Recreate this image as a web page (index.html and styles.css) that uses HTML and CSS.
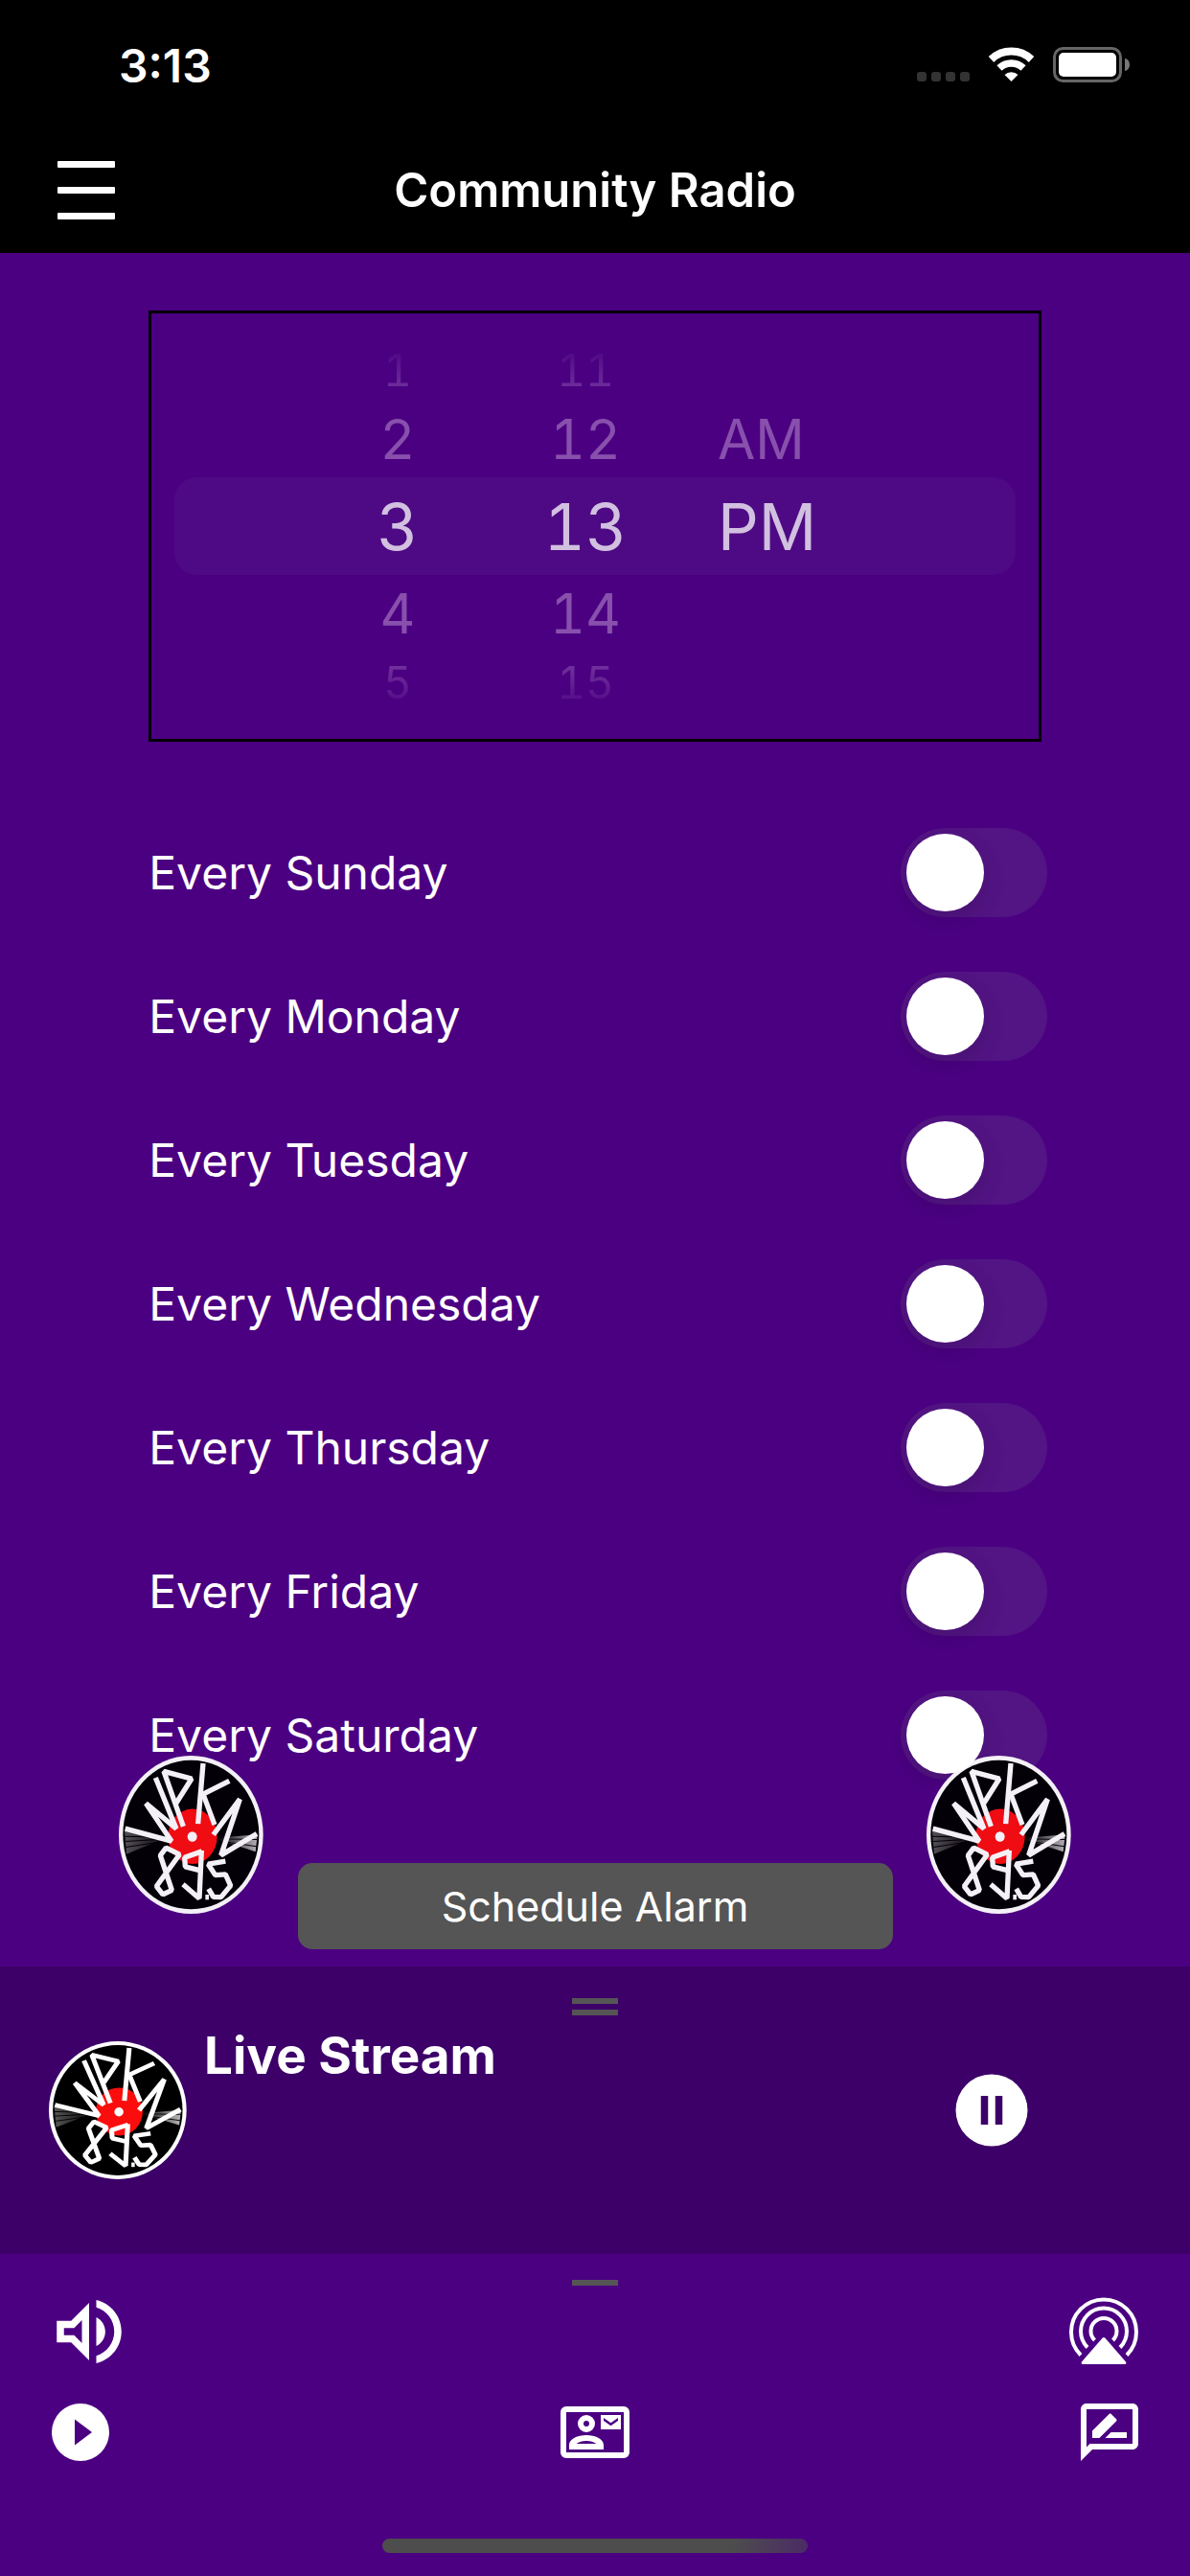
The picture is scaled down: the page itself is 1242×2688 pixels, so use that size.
FILE: index.html
```html
<!DOCTYPE html>
<html lang="en">
<head>
<meta charset="utf-8">
<meta name="viewport" content="width=device-width, initial-scale=1">
<title>Community Radio</title>
<link rel="stylesheet" href="styles.css">
</head>
<body>
<svg class="symbols" aria-hidden="true">
  <defs>
    <linearGradient id="shine-left" x1="0" x2="1" y1="0" y2="0">
      <stop offset="0" stop-color="#555"/><stop offset="1" stop-color="#000"/>
    </linearGradient>
    <linearGradient id="shine-right" x1="0" x2="1" y1="0" y2="0">
      <stop offset="0" stop-color="#000"/><stop offset="1" stop-color="#bbb"/>
    </linearGradient>
  </defs>
  <symbol id="record" viewBox="42 38 453 494" preserveAspectRatio="none">
    <ellipse cx="268" cy="285" rx="226" ry="247" fill="#fff"/>
    <ellipse cx="268" cy="285" rx="213" ry="233" fill="#000"/>
    <path d="M60 274L200 290L66 346z" fill="url(#shine-left)"/>
    <path d="M340 296L476 284L470 338z" fill="url(#shine-right)"/>
    <g stroke="#000" stroke-width="3" fill="none">
      <path d="M60 290L200 293M62 306L200 298M64 324L200 303M340 298L476 300M340 302L474 322"/>
    </g>
    <ellipse cx="273" cy="290" rx="77" ry="86" fill="#fb0d0d"/>
    <ellipse cx="272" cy="291" rx="15" ry="16" fill="#fff"/>
    <g stroke="#fff" stroke-width="16" stroke-linejoin="bevel" fill="none">
      <polyline points="62,266 207,305 127,187 222,266 157,107"/>
      <polyline points="244,259 183,87 270,110 222,186"/>
      <polyline points="306,62 290,251"/>
      <polyline points="388,117 306,158 342,254"/>
      <polyline points="338,285 421,174 362,349 474,282"/>
      <polygon points="190,326 172,350 208,458 180,472 160,446 232,347"/>
      <polyline points="302,337 248,356 250,385 298,397"/>
      <polyline points="301,334 294,484 243,440"/>
      <polyline points="376,368 322,377 344,411 376,409 392,444 362,480 338,479 323,454"/>
      <path d="M313 480h11"/>
    </g>
  </symbol>
</svg>

<div class="screen">
  <header>
    <div class="status">
      <time class="clock">3:13</time>
      <svg class="status-icons" viewBox="950 44 240 48" role="img" aria-label="Wi-Fi on, battery full">
        <g fill="#333">
          <rect x="957" y="75" width="10" height="10" rx="3"/><rect x="972" y="75" width="10" height="10" rx="3"/>
          <rect x="987" y="75" width="10" height="10" rx="3"/><rect x="1002" y="75" width="10" height="10" rx="3"/>
        </g>
        <g fill="none" stroke="#fff">
          <path d="M1034.500 62A30.500 30.500 0 0 1 1076.500 62" stroke-width="8"/>
          <path d="M1043 71A18 18 0 0 1 1068 71" stroke-width="7.500"/>
        </g>
        <path d="M1048.500 78A10 10 0 0 1 1062.500 78L1055.500 85z" fill="#fff"/>
        <rect x="1100.500" y="50.500" width="69" height="34" rx="9" fill="none" stroke="#666" stroke-width="3"/>
        <rect x="1105" y="55" width="60" height="25" rx="5" fill="#fff"/>
        <path d="M1174 61a5 6.500 0 0 1 0 13z" fill="#777"/>
      </svg>
    </div>
    <div class="nav">
      <button class="menu" type="button" aria-label="Menu"><span></span><span></span><span></span></button>
      <h1>Community Radio</h1>
    </div>
  </header>

  <main>
    <section class="picker" aria-label="Alarm time">
      <div class="time far top"><span>1</span><span>11</span><span></span></div>
      <div class="time near"><span>2</span><span>12</span><span>AM</span></div>
      <div class="time selected"><span>3</span><span>13</span><span>PM</span></div>
      <div class="time near"><span>4</span><span>14</span><span></span></div>
      <div class="time far"><span>5</span><span>15</span><span></span></div>
    </section>

    <div class="days">
      <label class="day">Every Sunday<input type="checkbox" role="switch"></label>
      <label class="day">Every Monday<input type="checkbox" role="switch"></label>
      <label class="day">Every Tuesday<input type="checkbox" role="switch"></label>
      <label class="day">Every Wednesday<input type="checkbox" role="switch"></label>
      <label class="day">Every Thursday<input type="checkbox" role="switch"></label>
      <label class="day">Every Friday<input type="checkbox" role="switch"></label>
      <label class="day">Every Saturday<input type="checkbox" role="switch"></label>
    </div>

    <div class="actions">
      <svg class="badge" aria-hidden="true"><use href="#record"/></svg>
      <button class="schedule" type="button">Schedule Alarm</button>
      <svg class="badge" aria-hidden="true"><use href="#record"/></svg>
    </div>
  </main>

  <section class="player" aria-label="Player">
    <div class="grip"><i></i><i></i></div>
    <div class="track">
      <svg class="cover" role="img" aria-label="Station logo"><use href="#record"/></svg>
      <h2>Live Stream</h2>
      <button class="icon large pause" type="button" aria-label="Pause">
        <svg viewBox="0 0 24 24"><path fill-rule="evenodd" d="M12 2a10 10 0 1 0 0 20a10 10 0 1 0 0-20zM9 8h2v8H9zM13 8h2v8h-2z"/></svg>
      </button>
    </div>
  </section>

  <footer>
    <div class="grip"><i></i></div>
    <div class="tools">
      <button class="icon large" type="button" aria-label="Volume">
        <svg viewBox="0 0 24 24"><path d="M3 9v6h4l5 5V4L7 9H3zm7-.17v6.340L7.830 13H5v-2h2.830L10 8.830zM16.500 12c0-1.770-1.020-3.290-2.500-4.030v8.050c1.480-.73 2.500-2.250 2.500-4.020zM14 3.230v2.060c2.890.86 5 3.540 5 6.710s-2.110 5.850-5 6.710v2.060c4.010-.91 7-4.490 7-8.770s-2.990-7.860-7-8.770z"/></svg>
      </button>
      <button class="icon large" type="button" aria-label="AirPlay">
        <svg viewBox="0 0 90 90">
          <g fill="none" stroke="#fff" stroke-width="4">
            <path d="M24 69.500A34 34 0 1 1 72 69.500"/>
            <path d="M31 61.500A24 24 0 1 1 65 61.500"/>
            <path d="M38.500 54A13.500 13.500 0 1 1 57.500 54"/>
          </g>
          <path d="M46.500 51.800Q48 50.200 49.500 51.800L71 76.500Q72 79 70 79H26Q24 79 25 76.500z"/>
        </svg>
      </button>
    </div>
    <div class="tools">
      <button class="icon" type="button" aria-label="Play">
        <svg viewBox="0 0 24 24"><path fill-rule="evenodd" d="M12 2a10 10 0 1 0 0 20a10 10 0 1 0 0-20zM10 16.500v-9l6 4.500z"/></svg>
      </button>
      <button class="icon" type="button" aria-label="Contact">
        <svg viewBox="0 0 24 24">
          <path fill-rule="evenodd" d="M2 3h20a2 2 0 0 1 2 2v14a2 2 0 0 1-2 2H2a2 2 0 0 1-2-2V5a2 2 0 0 1 2-2zM2 5v14h20V5z"/>
          <path fill-rule="evenodd" d="M9 6a3 3 0 1 0 0 6a3 3 0 1 0 0-6zM9 8a1 1 0 1 0 0 2a1 1 0 1 0 0-2z"/>
          <path fill-rule="evenodd" d="M3 18v-1.500C3 14.200 6 13 9 13s6 1.200 6 3.500V18zM5.500 16h7C11.500 15.300 10.500 15 9 15s-2.500.3-3.500 1z"/>
          <path fill-rule="evenodd" d="M14 6h7v5h-7zM15 7v1l2.500 1.750L20 8V7l-2.500 1.750z"/>
        </svg>
      </button>
      <button class="icon" type="button" aria-label="Feedback">
        <svg viewBox="0 0 24 24"><path d="M20 2H4c-1.100 0-2 .9-2 2v18l4-4h14c1.100 0 2-.9 2-2V4c0-1.100-.9-2-2-2zm0 14H5.170L4 17.170V4h16v12zM10.500 14H18v-2h-5.500l-2 2zm3.860-5.870c.2-.2.2-.51 0-.71l-1.770-1.770c-.2-.2-.51-.2-.71 0L6 11.530V14h2.470l5.890-5.870z"/></svg>
      </button>
    </div>
    <div class="home"></div>
  </footer>
</div>
</body>
</html>
```
FILE: styles.css
```css
:root {
  --indigo: #4b0082;
  --indigo-dark: #3c0068;
  --grey: #555;
}

* { box-sizing: border-box; }

body {
  margin: 0;
  background: var(--indigo);
  color: #fff;
  font-family: Inter, "Liberation Sans", sans-serif;
}

h1, h2 { margin: 0; }

button {
  border: 0;
  padding: 0;
  background: none;
  color: inherit;
  font-family: inherit;
  cursor: pointer;
}

svg { display: block; }

.symbols {
  position: absolute;
  width: 0;
  height: 0;
}

.screen {
  display: flex;
  flex-direction: column;
  min-height: 100vh;
}

header { background: #000; }

.status {
  display: flex;
  align-items: center;
  justify-content: space-between;
  height: 132px;
  padding: 4px 52px 0 124px;
}

.clock {
  font-size: 48px;
  font-weight: 600;
}

.status-icons {
  width: 240px;
  height: 48px;
}

.nav {
  display: grid;
  grid-template-columns: 60px 1fr 60px;
  align-items: center;
  height: 132px;
  padding: 0 60px;
}

.nav h1 {
  font-size: 49px;
  font-weight: 600;
  text-align: center;
}

.menu {
  display: flex;
  flex-direction: column;
  gap: 20px;
}

.menu span {
  width: 100%;
  height: 7px;
  border-radius: 1px;
  background: #fff;
}

main {
  flex: 1;
  padding: 60px 0 18px;
}

.picker {
  display: flex;
  flex-direction: column;
  justify-content: center;
  height: 450px;
  margin: 0 12.5%;
  padding: 0 24px;
  border: 3px solid #000;
  font-variant-numeric: tabular-nums;
}

.time {
  display: grid;
  grid-template-columns: 196px 196px 216px;
  justify-content: center;
  align-items: center;
  text-align: center;
}

.time span:last-child {
  padding-left: 40px;
  text-align: left;
}

.selected {
  height: 102px;
  border-radius: 24px;
  background: #4e0a84;
  color: #d2c0e0;
  font-size: 67px;
}

.near {
  height: 80px;
  color: #8850ac;
  font-size: 57px;
}

.far {
  height: 64px;
  font-size: 46px;
}

.far span {
  background: linear-gradient(#70309c 20%, #58108a 80%) text;
  color: transparent;
}

.far.top span {
  background-image: linear-gradient(#520a86 20%, #6c2c9a 80%);
}

.days {
  margin-top: 61px;
  padding: 0 12% 0 12.5%;
}

.day {
  display: flex;
  align-items: center;
  justify-content: space-between;
  height: 150px;
  font-size: 48px;
}

.day input {
  appearance: none;
  width: 153px;
  height: 93px;
  margin: 0;
  padding: 6px;
  border-radius: 47px;
  background: #531484;
}

.day input::before {
  content: "";
  display: block;
  width: 81px;
  height: 81px;
  border-radius: 50%;
  background: #fff;
  box-shadow: 0 8px 24px rgba(0, 0, 0, 0.15);
}

.day input:checked::before { margin-left: auto; }

.actions {
  position: relative;
  display: flex;
  align-items: flex-start;
  justify-content: space-between;
  margin-top: -53px;
  padding: 0 10%;
}

.badge {
  width: 151px;
  height: 165px;
  opacity: 0.94;
}

.schedule {
  width: 50vw;
  height: 90px;
  margin-top: 112px;
  border-radius: 15px;
  background: var(--grey);
  font-size: 43px;
}

.player {
  height: 300px;
  padding-top: 33px;
  background: var(--indigo-dark);
}

.grip {
  display: flex;
  flex-direction: column;
  align-items: center;
  gap: 6px;
}

.grip i {
  width: 48px;
  height: 6px;
  background: var(--grey);
}

.track {
  display: flex;
  align-items: flex-end;
  height: 159px;
  margin-top: 12px;
  padding: 0 162px 0 51px;
}

.cover {
  width: 144px;
  height: 144px;
}

.track h2 {
  flex: 1;
  align-self: flex-start;
  padding-left: 18px;
  font-size: 53px;
  font-weight: 700;
  line-height: 60px;
}

.icon {
  width: 72px;
  height: 72px;
}

.icon.large {
  width: 90px;
  height: 90px;
}

.icon svg {
  width: 100%;
  height: 100%;
  fill: #fff;
}

.icon.pause { margin-bottom: 27px; }

footer { padding: 27px 48px 24px; }

.tools {
  display: flex;
  justify-content: space-between;
  margin-top: 24px;
}

.grip + .tools { margin-top: 3px; }

.home {
  width: 444px;
  height: 15px;
  margin: 75px auto 0;
  border-radius: 8px;
  background: linear-gradient(90deg, #4d4d4d 82%, #4b2b66);
}
```
